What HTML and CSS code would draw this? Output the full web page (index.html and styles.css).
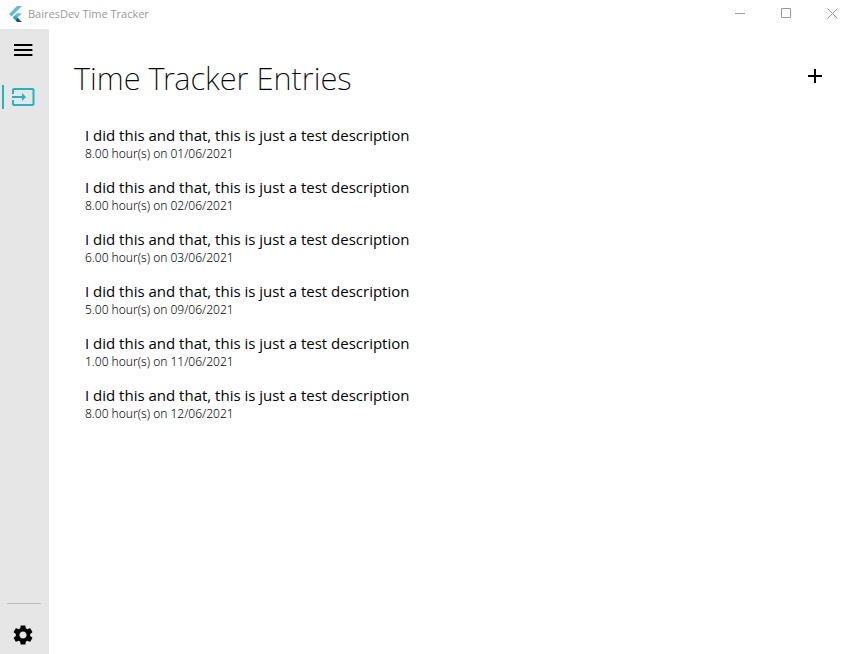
FILE: index.html
```html
<!DOCTYPE html>
<html lang="en">
<head>
<meta charset="utf-8">
<title>BairesDev Time Tracker</title>
<link rel="stylesheet" href="styles.css">
</head>
<body>
<header class="titlebar">
  <svg class="logo" viewBox="0 0 300 371" aria-hidden="true">
    <path fill="#5fbcd8" d="M184 0 0 185l57 57L299 0z"/>
    <path fill="#5fbcd8" d="M184 171 86 269l57 58 156-156z"/>
    <path fill="#35505e" d="M143 327l43 44h113l-99-101z"/>
    <path fill="#1fb5c4" d="M86 270l57-57 57 57-57 57z"/>
  </svg>
  <span class="app-name">BairesDev Time Tracker</span>
  <div class="window-controls">
    <button type="button" aria-label="Minimize"><svg viewBox="0 0 11 11"><path d="M0 5.5h10"/></svg></button>
    <button type="button" aria-label="Maximize"><svg viewBox="0 0 11 11"><path d="M.5.5h9v9h-9z"/></svg></button>
    <button type="button" aria-label="Close"><svg viewBox="0 0 11 11"><path d="M.5.5l10 10M10.5.5l-10 10"/></svg></button>
  </div>
</header>
<div class="shell">
  <nav class="rail" aria-label="Main">
    <button class="rail-item" type="button" aria-label="Menu"><svg viewBox="0 0 24 24"><path d="M3 18h18.400v-2H3zm0-5h18.400v-2H3zm0-7v2h18.400V6z"/></svg></button>
    <a class="rail-item active" href="#entries" aria-label="Entries"><svg viewBox="0 0 24 24"><path d="M21.500 3H3c-1.100 0-2 .9-2 2v4h2V5h18.500v14H3v-4H1v4c0 1.100.9 2 2 2h18.500c1.100 0 2-.9 2-2V5c0-1.100-.9-2-2-2zM11 16l4-4-4-4v3H1v2h10z"/></svg></a>
    <div class="rail-footer">
      <button class="rail-item" type="button" aria-label="Settings"><svg viewBox="0 0 24 24"><path d="M19.14 12.94c.04-.3.06-.61.06-.94 0-.32-.02-.64-.07-.94l2.03-1.58c.18-.14.23-.41.12-.61l-1.92-3.32c-.12-.22-.37-.29-.59-.22l-2.39.96c-.5-.38-1.03-.7-1.62-.94l-.36-2.54c-.04-.24-.24-.41-.48-.41h-3.84c-.24 0-.43.17-.47.41l-.36 2.54c-.59.24-1.13.57-1.62.94l-2.39-.96c-.22-.08-.47 0-.59.22L2.74 8.87c-.12.21-.08.47.12.61l2.03 1.58c-.05.3-.09.63-.09.94s.02.64.07.94l-2.03 1.58c-.18.14-.23.41-.12.61l1.92 3.32c.12.22.37.29.59.22l2.39-.96c.5.38 1.03.7 1.62.94l.36 2.54c.05.24.24.41.48.41h3.84c.24 0 .44-.17.47-.41l.36-2.54c.59-.24 1.13-.56 1.62-.94l2.39.96c.22.08.47 0 .59-.22l1.92-3.32c.12-.22.07-.47-.12-.61zM12 15.6c-1.98 0-3.6-1.62-3.6-3.6s1.62-3.6 3.6-3.6 3.6 1.62 3.6 3.6-1.62 3.6-3.6 3.6z"/></svg></button>
    </div>
  </nav>
  <main class="content" id="entries">
    <div class="page-head">
      <h1>Time Tracker Entries</h1>
      <button class="add" type="button" aria-label="Add entry"><svg viewBox="0 0 24 24"><path d="M19 13h-6v6h-2v-6H5v-2h6V5h2v6h6z"/></svg></button>
    </div>
    <ul class="entries">
      <li><p class="desc">I did this and that, this is just a test description</p><p class="meta">8.00 hour(s) on 01/06/2021</p></li>
      <li><p class="desc">I did this and that, this is just a test description</p><p class="meta">8.00 hour(s) on 02/06/2021</p></li>
      <li><p class="desc">I did this and that, this is just a test description</p><p class="meta">6.00 hour(s) on 03/06/2021</p></li>
      <li><p class="desc">I did this and that, this is just a test description</p><p class="meta">5.00 hour(s) on 09/06/2021</p></li>
      <li><p class="desc">I did this and that, this is just a test description</p><p class="meta">1.00 hour(s) on 11/06/2021</p></li>
      <li><p class="desc">I did this and that, this is just a test description</p><p class="meta">8.00 hour(s) on 12/06/2021</p></li>
    </ul>
  </main>
</div>
</body>
</html>
```
FILE: styles.css
```css
* { box-sizing: border-box; }
body {
  margin: 0;
  min-height: 100vh;
  display: flex;
  flex-direction: column;
  background: #fff;
  color: #000;
  font-family: "Segoe UI", "Open Sans", "Noto Sans", sans-serif;
}
h1, p, ul { margin: 0; padding: 0; }
button { border: 0; padding: 0; background: none; color: inherit; font: inherit; }
svg { display: block; }

.titlebar {
  display: flex;
  align-items: center;
  height: 29px;
  padding-left: 9px;
  padding-bottom: 2px;
  color: #999;
}
.logo { width: 13px; height: 16px; margin-right: 6px; }
.app-name { font-size: 11px; line-height: 16px; }
.window-controls { display: flex; gap: 6px; margin-left: auto; }
.window-controls button {
  width: 40px;
  height: 27px;
  display: flex;
  align-items: center;
  justify-content: center;
}
.window-controls svg { width: 11px; height: 11px; fill: none; stroke: #999; }

.shell { flex: 1; display: flex; }
.rail {
  width: 49px;
  flex: none;
  display: flex;
  flex-direction: column;
  background: #e6e6e6;
}
.rail-item {
  height: 42px;
  padding-left: 11px;
  display: flex;
  align-items: center;
  width: 100%;
}
.rail svg, .add svg { width: 24px; height: 24px; fill: currentColor; }
.rail-item.active {
  height: 24px;
  margin-top: 14px;
  margin-left: 2px;
  width: auto;
  padding-left: 7px;
  border-left: 2px solid #1fb5c4;
  color: #1fb5c4;
}
.rail-footer { margin-top: auto; }
.rail-footer::before {
  content: "";
  display: block;
  height: 1px;
  margin: 0 8px 12px 7px;
  background: #bdbdbd;
}
.rail-footer .rail-item { height: 38px; }

.content { flex: 1; padding: 23px 25px; }
.page-head { display: flex; align-items: center; justify-content: space-between; }
h1, .meta { font-family: "Segoe UI", "Noto Sans", "Open Sans", sans-serif; }
h1 {
  padding-top: 4px;
  font-size: 31px;
  line-height: 44px;
  font-weight: 200;
}
.entries { list-style: none; padding: 20px 11px; }
.entries li { height: 52px; padding: 4px 0; }
.desc { font-size: 15px; line-height: 22px; }
.meta { font-size: 12px; line-height: 16px; font-weight: 300; }
```
